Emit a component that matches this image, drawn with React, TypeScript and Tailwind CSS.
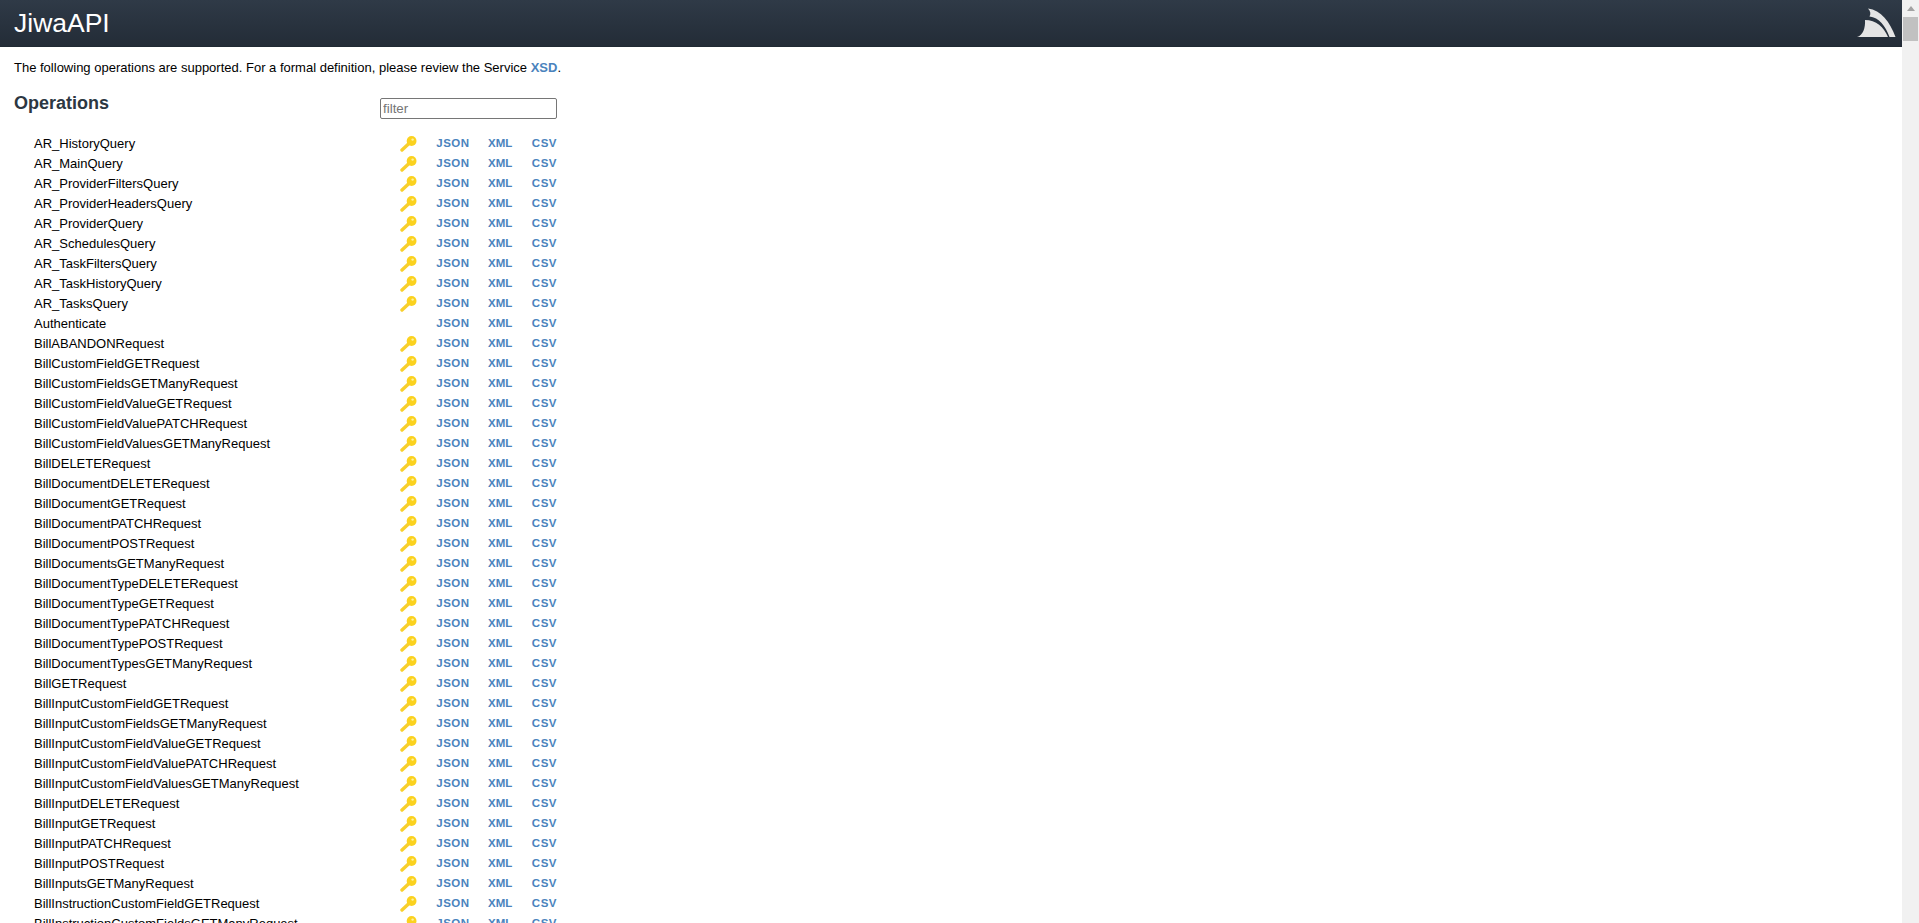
const names = [
  "AR_HistoryQuery","AR_MainQuery","AR_ProviderFiltersQuery","AR_ProviderHeadersQuery","AR_ProviderQuery","AR_SchedulesQuery","AR_TaskFiltersQuery","AR_TaskHistoryQuery","AR_TasksQuery","Authenticate",
  "BillABANDONRequest","BillCustomFieldGETRequest","BillCustomFieldsGETManyRequest","BillCustomFieldValueGETRequest","BillCustomFieldValuePATCHRequest","BillCustomFieldValuesGETManyRequest","BillDELETERequest","BillDocumentDELETERequest","BillDocumentGETRequest","BillDocumentPATCHRequest","BillDocumentPOSTRequest","BillDocumentsGETManyRequest","BillDocumentTypeDELETERequest","BillDocumentTypeGETRequest","BillDocumentTypePATCHRequest","BillDocumentTypePOSTRequest","BillDocumentTypesGETManyRequest","BillGETRequest","BillInputCustomFieldGETRequest","BillInputCustomFieldsGETManyRequest","BillInputCustomFieldValueGETRequest","BillInputCustomFieldValuePATCHRequest","BillInputCustomFieldValuesGETManyRequest","BillInputDELETERequest","BillInputGETRequest","BillInputPATCHRequest","BillInputPOSTRequest","BillInputsGETManyRequest","BillInstructionCustomFieldGETRequest","BillInstructionCustomFieldsGETManyRequest",
];

function Key() {
  return (
    <svg width="17" height="16" viewBox="0 0 17 16" className="block">
      <path d="M2 14 L9.5 7" stroke="#f8cf2c" strokeWidth="3.4" strokeLinecap="round" fill="none" />
      <circle cx="11.6" cy="5" r="4.9" fill="#fbd21f" />
      <circle cx="12.6" cy="3.6" r="1.2" fill="#fff2a0" />
    </svg>
  );
}

function Logo() {
  return (
    <svg width="39" height="30" viewBox="0 0 39 30" className="block">
      <path d="M11 0.5 C24 2 33 14 38.5 29 L32.5 29 C28.5 18 22 9.5 12.5 8.5 C14 6 13.5 3 11 0.5 Z" fill="#e4e4e4" />
      <path d="M8 12 C19 12 27 19 31 29 L0 29 C6 27.5 8.5 20 8 12 Z" fill="#e4e4e4" />
    </svg>
  );
}

export default function App() {
  return (
    <div className="flex h-[923px] w-full overflow-hidden bg-white font-['Liberation_Sans',Arial,sans-serif] text-[13px] text-black">
      <div className="min-w-0 flex-1 overflow-hidden">
        <header className="flex h-[47px] items-center justify-between border-b border-[#1f2933] bg-gradient-to-b from-[#2f3a47] to-[#232c37] pl-[14px] pr-[6px]">
          <h1 className="text-[26.5px] leading-none font-normal text-white">JiwaAPI</h1>
          <Logo />
        </header>
        <main className="pl-[14px]">
          <p className="mt-[13px] leading-[15px]">
            The following operations are supported. For a formal definition, please review the Service{" "}
            <a className="font-bold text-[#4a83bd]">XSD</a>.
          </p>
          <div className="mt-[15px] flex h-[44px] w-[543px] items-start justify-between">
            <h3 className="mt-[3px] text-[18px] leading-[20px] font-bold text-[#2c3742]">Operations</h3>
            <input
              placeholder="filter"
              className="mt-[8px] h-[21px] w-[177px] rounded-[2px] border border-[#767676] px-[2px] text-[13.33px] outline-none placeholder:text-[#757575]"
            />
          </div>
          <div className="w-[543px]">
            {names.map((n) => (
              <div key={n} className="flex h-[20px] items-center pl-[20px]">
                <span className="w-[368px] whitespace-nowrap">{n}</span>
                <span className="w-[36px]">{n !== "Authenticate" && <Key />}</span>
                <a className="w-[52px] text-[11.5px] font-bold tracking-[0.5px] text-[#4a83bd]">JSON</a>
                <a className="w-[44px] text-[11.5px] font-bold text-[#4a83bd]">XML</a>
                <a className="text-[11.5px] font-bold tracking-[0.5px] text-[#4a83bd]">CSV</a>
              </div>
            ))}
          </div>
        </main>
      </div>
      <div className="flex h-full w-[17px] shrink-0 flex-col bg-[#f1f1f1]">
        <div className="flex h-[17px] items-center justify-center">
          <div className="h-0 w-0 border-x-[4px] border-b-[5px] border-x-transparent border-b-[#a3a3a3]" />
        </div>
        <div className="mx-[1px] h-[24px] bg-[#c1c1c1]" />
      </div>
    </div>
  );
}
